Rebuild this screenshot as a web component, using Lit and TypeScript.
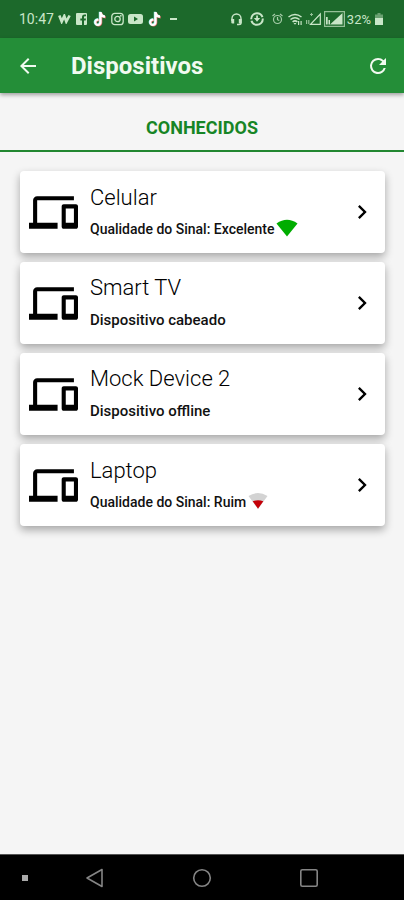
import { LitElement, html, svg, css, nothing, TemplateResult } from "lit";
import { customElement, property } from "lit/decorators.js";

type Signal = "excellent" | "poor";

interface Device {
  name: string;
  status: string;
  signal?: Signal;
}

const DEVICES: Device[] = [
  { name: "Celular", status: "Qualidade do Sinal: Excelente", signal: "excellent" },
  { name: "Smart TV", status: "Dispositivo cabeado" },
  { name: "Mock Device 2", status: "Dispositivo offline" },
  { name: "Laptop", status: "Qualidade do Sinal: Ruim", signal: "poor" },
];

const icon = (w: number, h: number, box: string, body: TemplateResult<2>) =>
  html`<svg width=${w} height=${h} viewBox=${box} fill="currentColor" aria-hidden="true">${body}</svg>`;

const NOTE =
  "M9 0v9.500a3.500 3.500 0 1 1-3-3.460v2.300a1.400 1.400 0 1 0 .8 1.260V0zM9 0c.2 1.900 1.400 3 3.200 3.200v2.200C10.900 5.400 9.800 5 8.800 4.300z";

const tiktok = icon(15, 16, "0 -1 14 15", svg`
  <path d=${NOTE} fill="#7fe8e4" transform="translate(-.5 -.2)"/>
  <path d=${NOTE} fill="#e2716f" transform="translate(.6 .6)"/>
  <path d=${NOTE} fill="#fff"/>`);

@customElement("status-bar")
export class StatusBar extends LitElement {
  static styles = css`
    :host {
      display: flex;
      justify-content: space-between;
      align-items: center;
      height: 38px;
      padding: 0 20px 0 19px;
      background: #1c692b;
      color: #c9e6c8;
      font-size: 14px;
    }
    .group {
      display: flex;
      align-items: center;
      gap: 4px;
    }
    .tight {
      gap: 2px;
      font-size: 13px;
    }
    svg {
      display: block;
    }
  `;

  render() {
    return html`
      <div class="group">
        <span>10:47</span>
        ${icon(13, 10, "0 0 13 10", svg`<path d="M1.300 1.500 3.700 7.600 6.300 2 8.300 7.600 11.600 1.500" fill="none" stroke="currentColor" stroke-width="2.600"/>`)}
        ${icon(13, 14, "0 0 13 14", svg`<path d="M2 1h9a1 1 0 0 1 1 1v10a1 1 0 0 1-1 1H9V8.500h1.700l.3-2H9V5.300c0-.6.300-1 1-1h1V2.600H9.500C7.800 2.600 7 3.600 7 5v1.500H5.300v2H7V13H2a1 1 0 0 1-1-1V2a1 1 0 0 1 1-1z"/>`)}
        ${tiktok}
        ${icon(13, 14, "0 0 13 14", svg`<g fill="none" stroke="currentColor" stroke-width="1.300"><rect x=".8" y="1.300" width="11.400" height="11.400" rx="3"/><circle cx="6.500" cy="7" r="2.700"/></g><circle cx="9.800" cy="3.800" r=".9"/>`)}
        ${icon(15, 12, "0 0 15 12", svg`<path fill-rule="evenodd" d="M2.500 1h10A2.500 2.500 0 0 1 15 3.500v5a2.500 2.500 0 0 1-2.500 2.500h-10A2.500 2.500 0 0 1 0 8.500v-5A2.500 2.500 0 0 1 2.500 1zM6 3.500v5L10 6z"/>`)}
        ${tiktok}
        ${icon(14, 4, "2 0 14 4", svg`<path d="M6 1h7v2H6z"/>`)}
      </div>
      <div class="group tight">
        ${icon(15, 14, "0 0 15 14", svg`<path d="M3 9V6.500a4.500 4.500 0 0 1 9 0V11q0 1.500-2 1.500H8" fill="none" stroke="currentColor" stroke-width="1.400"/><path d="M2.300 7h2.900v4.500H3.300a1 1 0 0 1-1-1zM9.800 7h2.900v3.500a1 1 0 0 1-1 1H9.800z"/>`)}
        ${icon(22, 16, "0 0 22 16", svg`<circle cx="11" cy="8" r="5.800" fill="none" stroke="currentColor" stroke-width="2" stroke-dasharray="16 1.500"/><path d="M10.200 4.500h1.700V7h2.300L11 10.800 7.900 7h2.300z"/>`)}
        ${icon(15, 14, "0 0 15 14", svg`<g fill="none" stroke="currentColor" stroke-width="1.200" opacity=".8"><circle cx="7.500" cy="7.500" r="4"/><path d="M7.500 5v2.700l1.800.8M2.500 4 5 2M12.500 4 10 2"/></g>`)}
        ${icon(17, 14, "0 0 17 14", svg`<g fill="none" stroke="currentColor" stroke-width="1.500"><path d="M1.500 5q6.500-5 13 0M3.500 7.500q4.500-3.500 9 0M5.600 9.900q2.400-2 4.800 0"/></g><path d="M6.500 11 8 12.700 9.500 11zM11 9h1.200v4H11zM13.500 9h1.200v4h-1.200z"/>`)}
        ${icon(16, 14, "0 0 16 14", svg`<path d="M14.300 2v10.300H4.500z" fill="none" stroke="currentColor" stroke-width="1.200"/><path d="M4 2h3v1H4zM5 1h1v3H5zM0 8h1.200v4H0zM2.200 8h1.200v4H2.200z" opacity=".7"/>`)}
        ${icon(21, 16, "0 0 21 16", svg`<path d="M.6.600h19.800v14.800H.6z" fill="none" stroke="currentColor" stroke-width="1.200" opacity=".7"/><path d="M18.500 2v11.500H6zM2 6h1.700v7.500H2zM4.500 9H6v4.500H4.500z"/>`)}
        <span>32%</span>
        ${icon(11, 14, "3 0 11 14", svg`<path d="M7.500 1h3v1.500H13V7H5V2.500h2.500z" opacity=".45"/><path d="M5 6h8v7H5z"/>`)}
      </div>
    `;
  }
}

@customElement("signal-icon")
export class SignalIcon extends LitElement {
  @property() level: Signal = "excellent";

  static styles = css`
    :host {
      display: block;
    }
    svg {
      display: block;
    }
    .full {
      color: #00ad00;
    }
    .empty {
      color: #d3d3d3;
    }
    .low {
      color: #c40008;
    }
  `;

  render() {
    return this.level === "excellent"
      ? html`<span class="full">${icon(22, 20, "0 0 22 20", svg`<path d="M.5 4.500Q11-3 21.500 4.500L11 17.500z"/>`)}</span>`
      : html`<span class="empty">${icon(22, 20, "0 0 22 20", svg`<path d="M1.500 4Q11-2 20.500 4L11 17z"/><path class="low" fill="currentColor" d="M5.700 9.200Q11 7.300 16.300 9.200L11 16.800z"/>`)}</span>`;
  }
}

@customElement("device-card")
export class DeviceCard extends LitElement {
  @property({ attribute: false }) device!: Device;

  static styles = css`
    .card {
      display: flex;
      align-items: center;
      width: 100%;
      min-height: 82px;
      padding: 0 9px;
      border: 0;
      border-radius: 4px;
      background: #fff;
      box-shadow: 0 4px 8px rgba(0, 0, 0, 0.32);
      color: #111;
      font: inherit;
      text-align: left;
      cursor: pointer;
    }
    svg {
      display: block;
      flex: none;
      color: #000;
    }
    .body {
      flex: 1;
      display: flex;
      flex-direction: column;
      gap: 8px;
      min-width: 0;
      padding-left: 12px;
    }
    .name {
      font-size: 22px;
      font-weight: 300;
      line-height: 26px;
      color: #000;
    }
    .status {
      display: flex;
      align-items: center;
      gap: 1px;
      font-size: 15px;
      font-weight: 500;
      line-height: 22px;
    }
    .measured {
      font-size: 14px;
      line-height: 20px;
    }
  `;

  render() {
    const { name, status, signal } = this.device;
    return html`
      <button class="card" type="button">
        ${icon(49, 49, "0 0 24 24", svg`<path d="M4 6h18V4H4c-1.100 0-2 .9-2 2v11H0v3h14v-3H4V6zm19 2h-6c-.55 0-1 .45-1 1v10c0 .55.45 1 1 1h6c.55 0 1-.45 1-1V9c0-.55-.45-1-1-1zm-1 9h-4v-7h4v7z"/>`)}
        <span class="body">
          <span class="name">${name}</span>
          <span class="status ${signal ? "measured" : ""}">
            ${status}${signal ? html`<signal-icon .level=${signal}></signal-icon>` : nothing}
          </span>
        </span>
        ${icon(28, 28, "0 0 24 24", svg`<path d="M10 6 8.590 7.410 13.170 12l-4.580 4.590L10 18l6-6z"/>`)}
      </button>
    `;
  }
}

@customElement("app-root")
export class AppRoot extends LitElement {
  static styles = css`
    :host {
      display: flex;
      flex-direction: column;
      min-height: 100vh;
      background: #f5f5f5;
      font-family: Roboto, "Liberation Sans", sans-serif;
    }
    button {
      display: flex;
      align-items: center;
      justify-content: center;
      padding: 0;
      border: 0;
      background: none;
      color: inherit;
      font: inherit;
      cursor: pointer;
    }
    svg {
      display: block;
    }
    .bar {
      display: flex;
      align-items: center;
      height: 55px;
      padding: 0 14px 0 16px;
      background: #248e38;
      box-shadow: 0 2px 4px rgba(0, 0, 0, 0.35);
      color: #f1faf0;
    }
    h1 {
      flex: 1;
      margin: 0;
      padding-left: 31px;
      font-size: 24px;
      font-weight: 700;
      line-height: 28px;
    }
    .tabs {
      display: flex;
    }
    .tab {
      flex: 1;
      height: 59px;
      padding-top: 12px;
      border-bottom: 2px solid #228731;
      color: #178526;
      font-size: 18px;
      font-weight: 700;
    }
    ul {
      display: flex;
      flex-direction: column;
      gap: 9px;
      flex: 1;
      margin: 0;
      padding: 19px 19px 19px 20px;
      list-style: none;
    }
    .nav {
      display: flex;
      align-items: center;
      height: 46px;
      border-top: 1px solid #555;
      box-sizing: border-box;
      background: #000;
      color: #858585;
    }
    .nav button {
      height: 100%;
      flex: 107 1 0;
    }
    .nav .dot {
      flex-grow: 33;
      padding-left: 8px;
    }
    .nav .rest {
      flex: 41 1 0;
    }
  `;

  render() {
    return html`
      <status-bar></status-bar>
      <header class="bar">
        <button type="button" aria-label="Voltar">
          ${icon(24, 24, "0 0 24 24", svg`<path d="M20 11H7.830l5.590-5.590L12 4l-8 8 8 8 1.410-1.410L7.830 13H20v-2z"/>`)}
        </button>
        <h1>Dispositivos</h1>
        <button type="button" aria-label="Atualizar">
          ${icon(24, 24, "0 0 24 24", svg`<path d="M17.650 6.350A7.958 7.958 0 0 0 12 4a8 8 0 1 0 7.730 10h-2.080A6 6 0 1 1 12 6c1.660 0 3.140.69 4.220 1.780L13 11h7V4l-2.350 2.350z"/>`)}
        </button>
      </header>
      <div class="tabs" role="tablist">
        <button class="tab" type="button" role="tab" aria-selected="true">CONHECIDOS</button>
      </div>
      <ul>
        ${DEVICES.map((d) => html`<li><device-card .device=${d}></device-card></li>`)}
      </ul>
      <nav class="nav">
        <button class="dot" type="button" aria-label="Ocultar">${icon(6, 6, "0 0 6 6", svg`<path d="M0 0h6v6H0z" fill="#aaa"/>`)}</button>
        <button type="button" aria-label="Voltar">
          ${icon(20, 20, "0 0 20 20", svg`<path d="M17 1.500v17L2 10z" fill="none" stroke="currentColor" stroke-width="1.600" stroke-linejoin="round"/>`)}
        </button>
        <button type="button" aria-label="Início">
          ${icon(20, 20, "0 0 20 20", svg`<circle cx="10" cy="10" r="8.300" fill="none" stroke="currentColor" stroke-width="1.600"/>`)}
        </button>
        <button type="button" aria-label="Recentes">
          ${icon(20, 20, "0 0 20 20", svg`<rect x="1.800" y="1.800" width="16.400" height="16.400" rx="1.500" fill="none" stroke="currentColor" stroke-width="1.600"/>`)}
        </button>
        <span class="rest"></span>
      </nav>
    `;
  }
}
